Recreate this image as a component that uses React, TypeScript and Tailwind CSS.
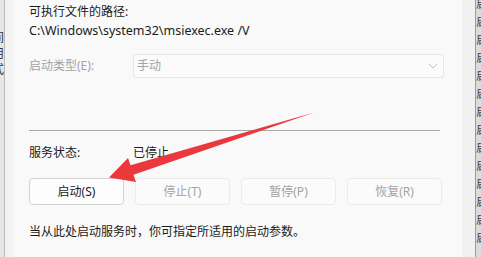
import React from "react";

const buttons = [
  { label: "启动(S)", enabled: true },
  { label: "停止(T)", enabled: false },
  { label: "暂停(P)", enabled: false },
  { label: "恢复(R)", enabled: false },
];

const rightRows = Array.from({ length: 14 });

const App = () => {
  return (
    <div className="relative flex h-[257px] w-[481px] overflow-hidden bg-[#f9f9f9] font-['Noto_Sans','Noto_Sans_CJK_SC',sans-serif] text-[12px] leading-[16px] text-[#1b1b1b]">
      {/* window behind, left edge */}
      <div className="w-[4px] shrink-0 overflow-hidden bg-[#e6e6e6] pt-[30px]">
        <div className="-ml-[8px] flex w-[12px] flex-col text-[#333] leading-[16px]">
          <span>间</span>
          <span>用</span>
          <span>式</span>
        </div>
      </div>
      <div className="w-px shrink-0 bg-[#b9b9b9]" />
      <div className="w-[8px] shrink-0 bg-[#f3f3f3]" />

      {/* dialog page */}
      <div className="flex w-[449px] shrink-0 flex-col pl-[16px] pt-[4px]">
        <p>可执行文件的路径:</p>
        <p className="mt-[3px] text-[12.5px]">C:\Windows\system32\msiexec.exe /V</p>

        <div className="mt-[15px] flex h-[24px] items-center">
          <span className="w-[104px] text-[#a3a3a3]">启动类型(E):</span>
          <div className="flex h-[24px] w-[311px] items-center justify-between rounded-[3px] border border-[#e6e6e6] bg-[#fbfbfb] pl-[3px] pr-[5px] text-[#a3a3a3]">
            <span>手动</span>
            <svg width="10" height="6" viewBox="0 0 10 6" fill="none">
              <path d="M1 1l4 4 4-4" stroke="#c4c4c4" strokeWidth="1" />
            </svg>
          </div>
        </div>

        <div className="mt-[52px] h-px w-[411px] bg-[#a6a6a6]" />

        <div className="mt-[14px] flex">
          <span className="w-[104px]">服务状态:</span>
          <span>已停止</span>
        </div>

        <div className="mt-[17px] flex gap-[11px]">
          {buttons.map((b) => (
            <div
              key={b.label}
              className={
                b.enabled
                  ? "flex h-[27px] w-[95px] items-center justify-center rounded-[4px] border border-[#d2d2d2] bg-[#fdfdfd] text-[#1b1b1b]"
                  : "flex h-[27px] w-[95px] items-center justify-center rounded-[4px] border border-[#ebebeb] bg-[#fbfbfb] text-[#a3a3a3]"
              }
            >
              {b.label}
            </div>
          ))}
        </div>

        <p className="mt-[19px]">当从此处启动服务时，你可指定所适用的启动参数。</p>
      </div>

      {/* dialog frame + window behind, right edge */}
      <div className="w-[13px] shrink-0 bg-[#f1f1f1]" />
      <div className="w-px shrink-0 bg-[#9c9c9c]" />
      <div className="flex flex-1 flex-col overflow-hidden bg-[#dcdcdc] leading-[20px] text-[#444]">
        {rightRows.map((_, i) => (
          <span key={i} className="-mt-[2px] whitespace-nowrap first:-mt-[6px]">
            启
          </span>
        ))}
      </div>

      {/* red annotation arrow */}
      <svg className="pointer-events-none absolute left-0 top-0" width="481" height="257" viewBox="0 0 481 257">
        <polygon
          points="314,112.5 130.5,165.2 128,158 109,177.5 136,182 133.5,174.8"
          fill="#ea383c"
        />
      </svg>
    </div>
  );
};

export default App;
